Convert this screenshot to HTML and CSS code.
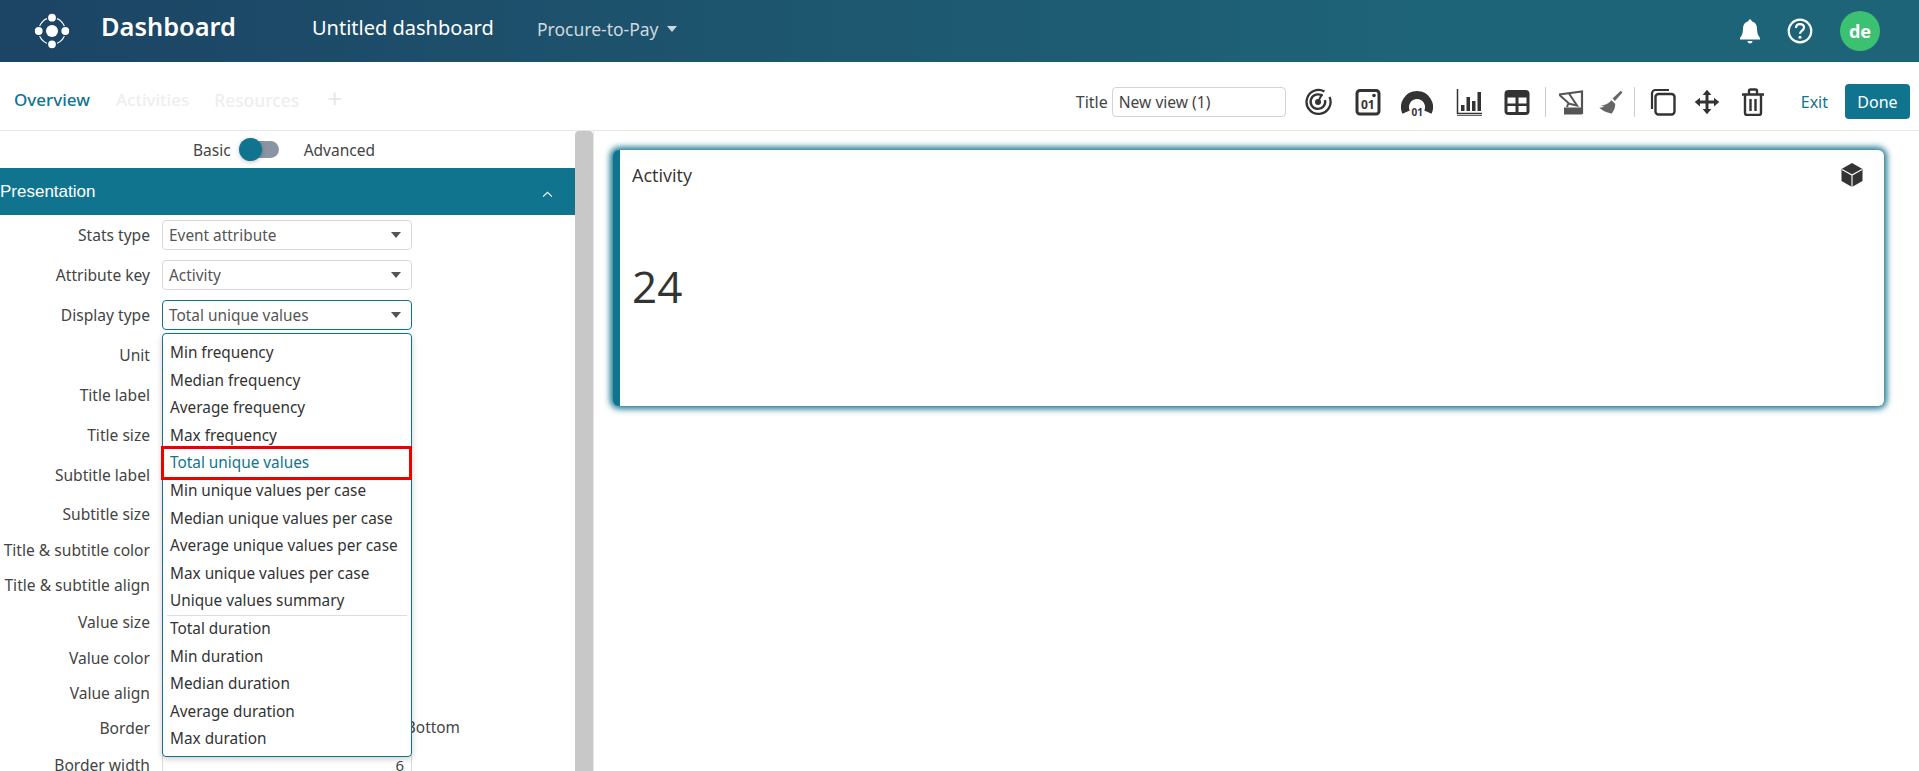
FILE: index.html
```html
<!DOCTYPE html>
<html lang="en">
<head>
<meta charset="utf-8">
<title>Dashboard</title>
<link rel="stylesheet" href="styles.css">
</head>
<body>
<header class="topbar">
  <svg class="logo" viewBox="0 0 36 36"><circle cx="18" cy="18" r="13.300" fill="none" stroke="#fff" stroke-width="1.200"/><circle cx="18" cy="18" r="6" fill="#fff"/><g fill="#fff" stroke="#1c4464" stroke-width="1.400"><circle cx="18" cy="4.700" r="4.600"/><circle cx="18" cy="31.300" r="4.600"/><circle cx="4.700" cy="18" r="4.600"/><circle cx="31.300" cy="18" r="4.600"/></g></svg>
  <div class="brand">Dashboard</div>
  <div class="doc-title">Untitled dashboard</div>
  <div class="log-name">Procure-to-Pay<span class="caret-light"></span></div>
  <div class="top-right">
    <svg class="bell" viewBox="0 0 22 26"><path d="M11 1.500c1 0 1.600.7 1.600 1.700 3.600.8 5.400 3.600 5.400 7.300 0 4.500 1 7 3 9.500v1.500H1V20c2-2.500 3-5 3-9.500 0-3.700 1.800-6.500 5.400-7.300 0-1 .6-1.700 1.600-1.700zM8.500 23h5c0 1.500-1.100 2.500-2.500 2.500S8.500 24.500 8.500 23z" fill="#fff"/></svg>
    <svg class="help" viewBox="0 0 26 26"><circle cx="13" cy="13" r="11.300" fill="none" stroke="#fff" stroke-width="2.200"/><path d="M9 10c0-2.500 1.800-3.800 4-3.800s4 1.300 4 3.400c0 3.200-4 3-4 6.200" fill="none" stroke="#fff" stroke-width="2.200"/><circle cx="13" cy="19.300" r="1.500" fill="#fff"/></svg>
    <div class="avatar">de</div>
  </div>
</header>

<nav class="subbar">
  <div class="tabs">
    <span class="tab tab-active">Overview</span>
    <span class="tab">Activities</span>
    <span class="tab tab-res">Resources</span>
    <span class="tab-add">+</span>
  </div>
  <div class="tools">
    <label class="title-label">Title</label>
    <div class="title-input">New view (1)</div>
    <svg class="tool tool-radar" viewBox="0 0 28 28"><g fill="none" stroke="#333" stroke-width="2.300"><path d="M20.500 3.500A12 12 0 1 0 25.500 9"/><path d="M18.500 8A7.300 7.300 0 1 0 21 12"/><path d="M14 14L18 6" stroke-width="2"/></g><circle cx="14" cy="14" r="3" fill="#333"/></svg>
    <svg class="tool tool-card" viewBox="0 0 28 28"><rect x="3" y="2.500" width="22" height="23.500" rx="3" fill="#fff" stroke="#333" stroke-width="3"/><circle cx="20" cy="7.500" r="1.800" fill="#333"/><text class="icon-text" x="7" y="21" font-size="12">01</text></svg>
    <svg class="tool tool-wide" viewBox="0 0 32 28"><path d="M5.100 24.100A12 12 0 1 1 26.900 24.100" fill="none" stroke="#333" stroke-width="8"/><text class="icon-text" x="10.500" y="27.500" font-size="10">01</text></svg>
    <svg class="tool" viewBox="0 0 28 28"><path d="M2.500 1v24.500H27M2 28h25" fill="none" stroke="#333" stroke-width="1.500"/><path d="M6 17h3.500v6H6zM11.500 9h3.500v14h-3.500zM17 13h3.500v10H17zM22.500 4H26v19h-3.500z" fill="#333"/></svg>
    <svg class="tool" viewBox="0 0 28 28"><rect x="1.500" y="2" width="25" height="25" rx="4" fill="#333"/><path d="M4.500 9.500h8v6h-8zM15.500 9.500h8v6h-8zM4.500 18h8v6h-8zM15.500 18h8v6h-8z" fill="#fff"/></svg>
    <span class="sep sep-a"></span>
    <svg class="tool tool-gray" viewBox="0 0 28 28"><path d="M2 6.500L25 3.500V26" fill="none" stroke="#555" stroke-width="2.200"/><path d="M2.500 7l9 8-1.500 4M12 5.500l8 12-9-2" fill="none" stroke="#555" stroke-width="2"/><path d="M7 19.500h18v7H7z" fill="#555"/></svg>
    <svg class="tool tool-gray tool-broom" viewBox="-1 -1 30 30"><path d="M25.500 2l1.800 1.800-8 9-2.600-2.600z" fill="#666"/><path d="M15.500 12l4 4c.5 4-2 8-3.500 10.500-3-.4-9-2-13.500-6.500 3 0 4.500-.5 5.500-1.500-1 0-2.500 0-4-.5 4-.5 8-2 11.500-6z" fill="#666"/></svg>
    <span class="sep sep-b"></span>
    <svg class="tool tool-copy" viewBox="0 0 28 28"><path d="M4 21V5.500A3.500 3.500 0 0 1 7.500 2H21" fill="none" stroke="#333" stroke-width="2.200"/><rect x="7.500" y="6" width="19" height="20.500" rx="3" fill="none" stroke="#333" stroke-width="2.400"/></svg>
    <svg class="tool tool-move" viewBox="-2 -2 32 32"><path d="M14 3v22M3 14h22" stroke="#333" stroke-width="3.400"/><path d="M14 0l5 6H9zM14 28l-5-6h10zM0 14l6-5v10zM28 14l-6 5V9z" fill="#333"/></svg>
    <svg class="tool tool-trash" viewBox="0 0 28 28"><path d="M3 6.500h22M10 6V3a1.500 1.500 0 0 1 1.500-1.500h5A1.500 1.500 0 0 1 18 3v3M6 7v18a2 2 0 0 0 2 2h12a2 2 0 0 0 2-2V7M11.500 11v12M16.500 11v12" fill="none" stroke="#333" stroke-width="2.400"/></svg>
    <span class="exit">Exit</span>
    <span class="done">Done</span>
  </div>
</nav>

<main class="content">
  <aside class="panel">
    <div class="mode">
      <span>Basic</span>
      <span class="switch"><span class="knob"></span></span>
      <span class="mode-adv">Advanced</span>
    </div>
    <div class="section-head"><span>Presentation</span><svg class="chevron" viewBox="0 0 10 6"><path d="M1 5l4-4 4 4" fill="none" stroke="#fff" stroke-width="1"/></svg></div>
    <div class="form">
      <div class="row"><span class="lbl">Stats type</span><div class="select">Event attribute<i class="caret"></i></div></div>
      <div class="row"><span class="lbl">Attribute key</span><div class="select">Activity<i class="caret"></i></div></div>
      <div class="row"><span class="lbl">Display type</span><div class="select select-open">Total unique values<i class="caret"></i></div></div>
      <div class="row"><span class="lbl">Unit</span></div>
      <div class="row"><span class="lbl">Title label</span></div>
      <div class="row"><span class="lbl">Title size</span></div>
      <div class="row"><span class="lbl">Subtitle label</span></div>
      <div class="row row-37"><span class="lbl">Subtitle size</span></div>
      <div class="row row-35"><span class="lbl">Title &amp; subtitle color</span><span class="swatch"></span></div>
      <div class="row row-36"><span class="lbl">Title &amp; subtitle align</span></div>
      <div class="row row-37"><span class="lbl">Value size</span></div>
      <div class="row row-35"><span class="lbl">Value color</span><span class="swatch"></span></div>
      <div class="row row-35"><span class="lbl">Value align</span></div>
      <div class="row row-35"><span class="lbl">Border</span><span class="side-text">Bottom</span></div>
      <div class="row"><span class="lbl">Border width</span><div class="num-input">6</div></div>
      <ul class="menu">
        <li>Min frequency</li>
        <li>Median frequency</li>
        <li>Average frequency</li>
        <li>Max frequency</li>
        <li class="picked">Total unique values</li>
        <li>Min unique values per case</li>
        <li>Median unique values per case</li>
        <li>Average unique values per case</li>
        <li>Max unique values per case</li>
        <li>Unique values summary</li>
        <li class="divided">Total duration</li>
        <li>Min duration</li>
        <li>Median duration</li>
        <li>Average duration</li>
        <li>Max duration</li>
      </ul>
    </div>
  </aside>
  <div class="scrollbar"></div>
  <section class="canvas">
    <article class="card">
      <div class="card-head">
        <span class="card-title">Activity</span>
        <svg class="cube" viewBox="0 0 24 26"><path d="M12 1l10.500 6v12L12 25 1.500 19V7z" fill="#333"/><path d="M2 7.500l10 5.500 10-5.500M12 13v12" fill="none" stroke="#fff" stroke-width="1.100"/></svg>
      </div>
      <div class="card-value">24</div>
    </article>
  </section>
</main>
</body>
</html>
```

FILE: styles.css
```css
* { box-sizing: border-box; }
html, body { margin: 0; height: 100%; overflow: hidden; }
body { font-family: "Noto Sans", "Open Sans", sans-serif; color: #333; background: #fff; font-size: 15px; }

.topbar { height: 62px; display: flex; align-items: center; background: linear-gradient(90deg, #1c4464, #1e6478 75%, #1e6478); color: #fff; }
.logo { width: 36px; height: 36px; margin-left: 34px; }
.brand { margin: 0 0 10px 31px; font-size: 25.4px; font-weight: 600; width: 211px; }
.doc-title { font-size: 20px; width: 225px; margin-bottom: 7px; }
.log-name { font-size: 17.5px; color: #cfd8de; display: flex; align-items: center; margin-bottom: 5px; }
.caret-light { width: 0; height: 0; margin-left: 8px; border: 5px solid transparent; border-top: 6px solid #cfd8de; border-bottom: 0; }
.top-right { margin-left: auto; display: flex; align-items: center; margin-right: 39px; }
.bell { width: 22px; height: 26px; }
.help { width: 26px; height: 26px; margin-left: 26px; }
.avatar { width: 40px; height: 40px; margin-left: 27px; border-radius: 50%; background: #3cc172; color: #fff; font-weight: 700; font-size: 18px; display: flex; align-items: center; justify-content: center; }

.subbar { height: 69px; display: flex; align-items: center; justify-content: space-between; border-bottom: 1px solid #e6e6e6; padding-right: 9px; }
.tabs { display: flex; align-items: center; padding-left: 14px; margin-top: 7px; }
.tab { font-size: 17px; font-weight: 500; color: #eeeeee; margin-right: 25px; }
.tab-active { color: #11748f; margin-right: 26px; }
.tab-res { font-size: 17.4px; }
.tab-add { font-size: 26px; color: #e8e8e8; margin-left: 3px; line-height: 1; margin-top: -4px; }
.tools { display: flex; align-items: center; margin-top: 11px; }
.title-label { font-size: 16px; color: #444; margin-right: 4px; }
.title-input { width: 174px; height: 30px; border: 1px solid #d4d4d4; border-radius: 4px; padding-left: 6px; font-size: 15.6px; line-height: 28px; color: #444; margin-right: 18px; }
.tool { width: 28px; height: 28px; margin-right: 20px; flex: none; }
.tool-radar { margin-right: 22px; }
.tool-card { margin-right: 19px; }
.tool-wide { width: 32px; margin-right: 22px; }
.tool-gray { margin-right: 11px; }
.tool-broom { margin-right: 10px; }
.tool-copy { margin-right: 17px; }
.tool-move { margin-right: 18px; }
.tool-trash { margin-right: 0; }
.icon-text { font-family: "Noto Sans", sans-serif; font-weight: 700; fill: #333; }
.sep { width: 1px; height: 30px; background: #ccc; flex: none; }
.sep-a { margin: 0 11px 0 -6px; }
.sep-b { margin-right: 13px; }
.exit { font-size: 16px; color: #11748f; margin: 0 17px 0 34px; }
.done { width: 65px; height: 35px; border-radius: 4px; background: #11748f; color: #fff; font-size: 16px; display: flex; align-items: center; justify-content: center; }

.content { display: flex; height: 640px; }
.panel { width: 575px; flex: none; overflow: hidden; }
.mode { height: 37px; display: flex; align-items: center; padding-left: 193px; font-size: 15.5px; color: #444; }
.switch { position: relative; width: 40px; height: 17px; margin-left: 8px; }
.switch::before { content: ""; position: absolute; left: 12px; right: 0; top: 0; bottom: 0; border-radius: 9px; background: #8a94a3; }
.knob { position: absolute; left: 0; top: -3px; width: 23px; height: 23px; border-radius: 50%; background: #11748f; box-shadow: 0 1px 4px rgba(0,0,0,.25); }
.mode-adv { margin-left: 25px; }
.section-head { height: 47px; background: #11748f; color: #fff; display: flex; align-items: center; justify-content: space-between; padding-right: 22px; font-family: "Liberation Sans", sans-serif; font-size: 17px; }
.chevron { width: 11px; height: 7px; margin-top: 6px; }
.form { position: relative; }
.row { height: 40px; display: flex; align-items: center; position: relative; }
.row-37 { height: 37px; }
.row-36 { height: 36px; }
.row-35 { height: 35px; }
.lbl { width: 150px; text-align: right; margin-right: 12px; flex: none; white-space: nowrap; color: #444; font-size: 15.6px; }
.select { position: relative; width: 250px; height: 30px; border: 1px solid #d8d8d8; border-radius: 4px; padding-left: 6px; line-height: 29px; color: #555; font-size: 15.4px; }
.select-open { border-color: #11748f; }
.caret { position: absolute; right: 10px; top: 11px; width: 0; height: 0; border: 5px solid transparent; border-top: 6px solid #555; border-bottom: 0; }
.swatch { width: 10px; height: 14px; background: #999; border-radius: 2px; }
.side-text { width: 298px; text-align: right; color: #444; font-size: 15.4px; }
.num-input { width: 250px; height: 30px; border: 1px solid #ddd; border-radius: 4px; padding-right: 7px; text-align: right; line-height: 28px; color: #444; }
.menu { position: absolute; left: 162px; top: 118px; width: 250px; height: 424px; margin: 0; padding: 5px 0 0; list-style: none; background: #fff; border: 1px solid #11748f; border-radius: 4px; box-shadow: 0 2px 6px rgba(0,0,0,.2); }
.menu li { height: 27.6px; line-height: 27.6px; padding-left: 7px; white-space: nowrap; font-size: 15.35px; color: #333; }
.menu .picked { color: #11748f; outline: 3px solid #ec0000; margin: 0 2px 0 1px; padding-left: 6px; position: relative; }
.menu .divided { position: relative; }
.menu .divided::before { content: ""; position: absolute; left: 4px; right: 4px; top: 0; height: 1px; background: #ddd; }

.scrollbar { width: 18px; flex: none; background: #c8c8c8; border-radius: 4px 4px 0 0; }
.canvas { flex: 1; border-left: 1px solid #e6e6e6; padding: 19px 35px 0 19px; }
.card { height: 256px; border-left: 7px solid #11748f; border-radius: 6px; background: #fff; box-shadow: 0 0 6px 3px #1f7a93; padding: 12px 20px 0 12px; }
.card-head { display: flex; justify-content: space-between; align-items: center; height: 26px; }
.card-title { font-family: "Open Sans", sans-serif; font-size: 18px; color: #333; }
.cube { width: 24px; height: 26px; }
.card-value { font-family: "Open Sans", sans-serif; font-size: 44px; color: #333; margin-top: 68px; line-height: 60px; }
```
